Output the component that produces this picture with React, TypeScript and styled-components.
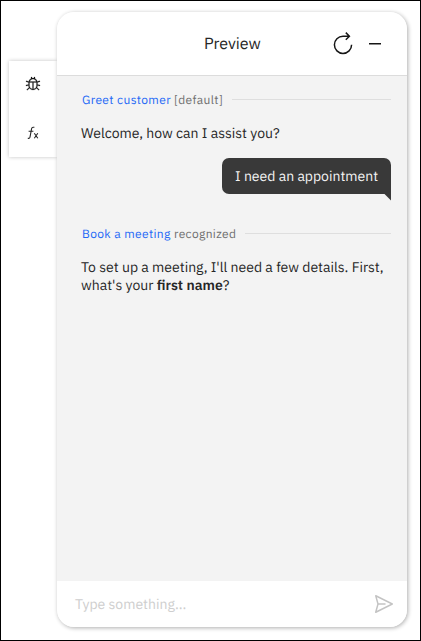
import React from "react";
import styled, { createGlobalStyle } from "styled-components";

const GlobalStyle = createGlobalStyle`
  * { box-sizing: border-box; }
  body { margin: 0; background: #fff; }
  button { border: 0; padding: 0; background: none; display: block; }
  svg { display: block; }
`;

const Frame = styled.main`
  width: 421px;
  height: 641px;
  border: 1px solid #000;
  background: #fff;
  display: flex;
  align-items: flex-start;
  padding: 11px 0 0 8px;
  overflow: hidden;
  font-family: "IBM Plex Sans", Roboto, sans-serif;
  text-rendering: geometricPrecision;
  color: #262626;
`;

const ToolRail = styled.nav`
  width: 48px;
  height: 96px;
  margin-top: 49px;
  padding: 15px 0 0 16px;
  background: #fff;
  box-shadow: 0 0 4px rgba(0, 0, 0, 0.24);
  display: flex;
  flex-direction: column;
  gap: 33px;
`;

const Panel = styled.section`
  width: 350px;
  height: 615px;
  border-radius: 17px;
  overflow: hidden;
  background: #f3f3f3;
  box-shadow: 1px 1px 4px rgba(0, 0, 0, 0.32);
  display: flex;
  flex-direction: column;
  z-index: 1;
`;

const Header = styled.header`
  height: 64px;
  flex: none;
  background: #fff;
  border-bottom: 1px solid #dcdcdc;
  display: grid;
  grid-template-columns: 147px 1fr 24px 12px;
  padding-right: 26px;
  align-items: center;
`;

const Title = styled.h1`
  grid-column: 2;
  margin: 0;
  font-size: 16px;
  line-height: 20px;
  font-weight: 400;
`;

const HeaderButton = styled.button<{ $shift?: number }>`
  margin-left: ${(p) => -(p.$shift ?? 0)}px;
`;

const Conversation = styled.div`
  flex: 1;
  padding: 14px 16px 0 24px;
  display: flex;
  flex-direction: column;
`;

const StepLabel = styled.div`
  height: 20px;
  padding-left: 1px;
  display: flex;
  align-items: flex-start;
  font-size: 12px;
  line-height: 22px;
  letter-spacing: 0.36px;
  white-space: pre;
  color: #6f6f6f;
  &::after {
    content: "";
    flex: 1;
    height: 1px;
    margin: 9px 0 0 9px;
    background: #dedede;
  }
`;

const StepLink = styled.span`
  color: #2469f6;
`;

const Message = styled.p`
  margin: 14px 0 0;
  font-size: 14px;
  line-height: 18px;
  white-space: nowrap;
  strong { font-weight: 600; }
`;

const Reply = styled.div`
  position: relative;
  align-self: flex-end;
  width: 169px;
  height: 36px;
  margin: 15.5px 0 30.5px;
  padding-left: 13px;
  border-radius: 7px 7px 0 7px;
  background: #393939;
  color: #f4f4f4;
  font-size: 14px;
  line-height: 36px;
  white-space: nowrap;
  &::after {
    content: "";
    position: absolute;
    top: 100%;
    right: 0;
    width: 7px;
    height: 7px;
    background: #393939;
    clip-path: polygon(0 0, 100% 0, 100% 100%);
  }
`;

const Composer = styled.form`
  height: 46px;
  flex: none;
  background: #fff;
  padding: 0 11px 0 18px;
  display: flex;
  align-items: center;
  justify-content: space-between;
`;

const Placeholder = styled.span`
  font-size: 14px;
  line-height: 20px;
  color: #cecece;
`;

const BugIcon = () => (
  <svg width="16" height="16" viewBox="0 0 32 32" fill="#161616" stroke="#161616" strokeWidth="0.4">
    <path d="M29.83,20l.34-2L25,17.15V13c0-.08,0-.15,0-.23l5.06-1.36-.51-1.93-4.83,1.29A9,9,0,0,0,20,5V2H18V4.23a8.81,8.81,0,0,0-4,0V2H12V5a9,9,0,0,0-4.71,5.82L2.46,9.48,2,11.41,7,12.77c0,.08,0,.15,0,.23v4.15L1.84,18l.32,2L7,19.18a8.9,8.9,0,0,0,.82,3.57L3.29,27.29l1.42,1.42,4.19-4.2a9,9,0,0,0,14.2,0l4.19,4.2,1.42-1.42-4.54-4.54A8.9,8.9,0,0,0,25,19.18ZM15,25.92A7,7,0,0,1,9,19V13h6ZM9.29,11a7,7,0,0,1,13.42,0ZM23,19a7,7,0,0,1-6,6.92V13h6Z" />
  </svg>
);

const FunctionIcon = () => (
  <svg width="16" height="16" viewBox="0 0 16 16" fill="none" stroke="#262626" strokeWidth="1.1">
    <path d="M9.4 2.2H8.1c-.9 0-1.3.5-1.5 1.4L5 12.1c-.2.9-.6 1.3-1.4 1.3H2.8M3.6 6.2h4.8M9.3 8.2l3.5 5M12.8 8.2l-3.5 5" />
  </svg>
);

const RestartIcon = () => (
  <svg width="24" height="24" viewBox="0 0 24 24" fill="none" stroke="#161616" strokeWidth="1.5">
    <path d="M20.6 12.8a8.6 8.6 0 1 1-8.6-8.6h6.3M14.8.6l3.6 3.6-3.6 3.6" />
  </svg>
);

const MinimizeIcon = () => (
  <svg width="12" height="12" viewBox="0 0 12 12" stroke="#161616" strokeWidth="1.5">
    <path d="M0 5.7h12" />
  </svg>
);

const SendIcon = () => (
  <svg width="24" height="24" viewBox="0 0 32 32" fill="#c3c3c3">
    <path d="M27.45,15.11l-22-11a1,1,0,0,0-1.08.12,1,1,0,0,0-.33,1L7,16,4,26.74A1,1,0,0,0,5,28a1,1,0,0,0,.45-.11l22-11a1,1,0,0,0,0-1.78Zm-20.9,10L8.76,17H18V15H8.76L6.55,6.89,24.76,16Z" />
  </svg>
);

export default function App() {
  return (
    <>
      <GlobalStyle />
      <Frame>
        <ToolRail>
          <button type="button" aria-label="Debug"><BugIcon /></button>
          <button type="button" aria-label="Variables"><FunctionIcon /></button>
        </ToolRail>
        <Panel>
          <Header>
            <Title>Preview</Title>
            <HeaderButton $shift={14} aria-label="Restart"><RestartIcon /></HeaderButton>
            <HeaderButton aria-label="Minimize"><MinimizeIcon /></HeaderButton>
          </Header>
          <Conversation>
            <StepLabel>
              <StepLink>Greet customer </StepLink>
              <span>[default]</span>
            </StepLabel>
            <Message>Welcome, how can I assist you?</Message>
            <Reply>I need an appointment</Reply>
            <StepLabel>
              <StepLink>Book a meeting </StepLink>
              <span>recognized</span>
            </StepLabel>
            <Message>
              To set up a meeting, I'll need a few details. First,<br />
              what's your <strong>first name</strong>?
            </Message>
          </Conversation>
          <Composer>
            <Placeholder>Type something...</Placeholder>
            <button type="button" aria-label="Send"><SendIcon /></button>
          </Composer>
        </Panel>
      </Frame>
    </>
  );
}
